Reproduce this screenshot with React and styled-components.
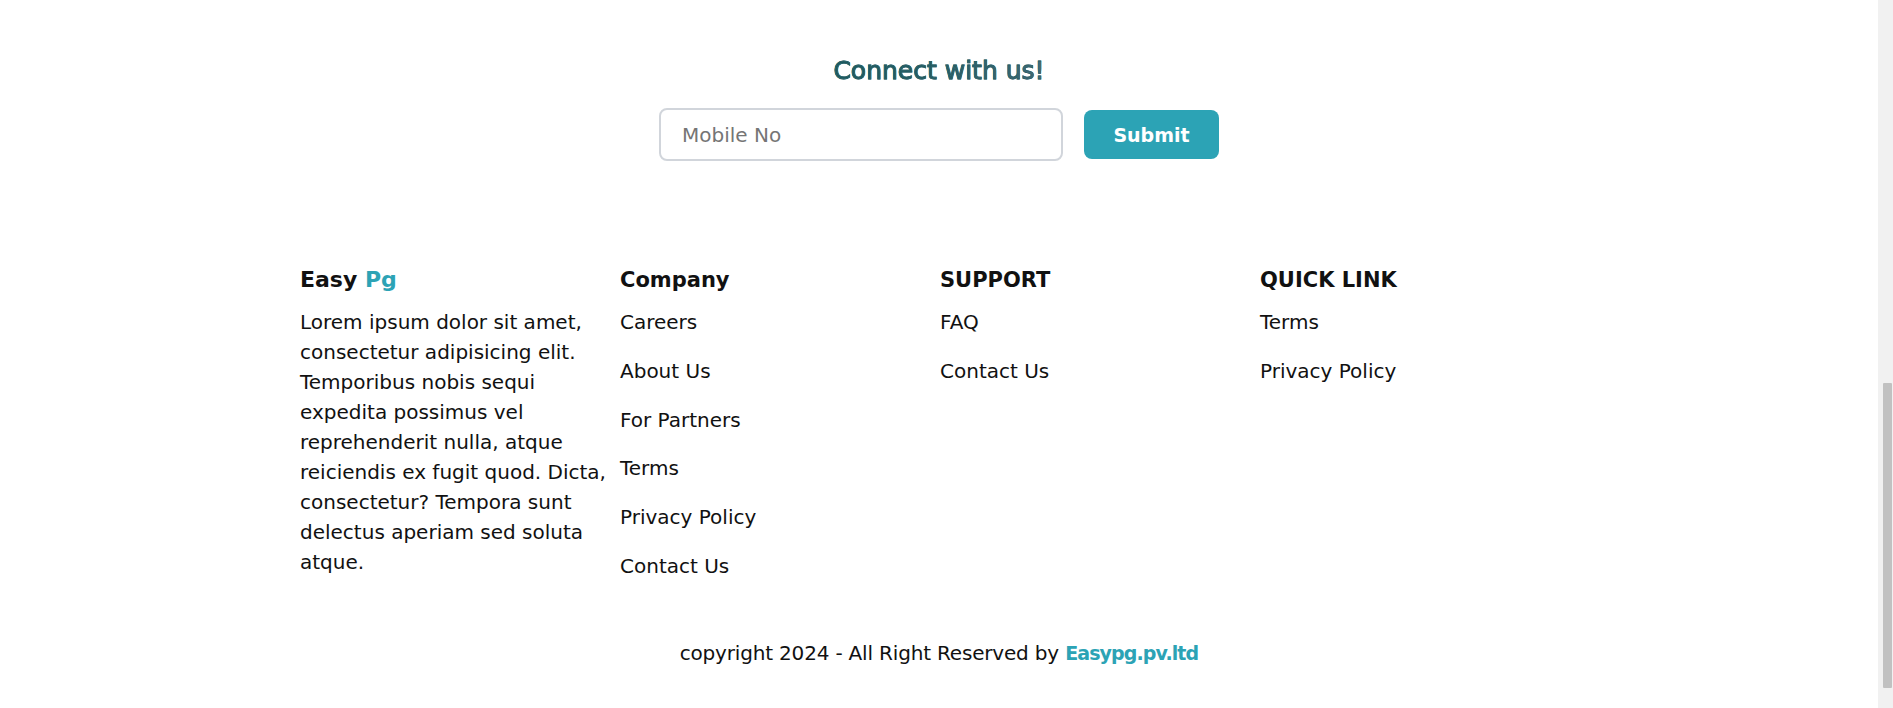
import React from 'react';
import styled, { createGlobalStyle } from 'styled-components';

const colors = {
  teal: '#2ca3b5',
  text: '#111111',
  border: '#d1d5db',
  placeholder: '#9da3b4',
};

const GlobalStyle = createGlobalStyle`
  body {
    margin: 0;
    background: #ffffff;
    font-family: "DejaVu Sans", "Liberation Sans", sans-serif;
    color: ${colors.text};
    overflow: hidden;
  }
  * {
    box-sizing: border-box;
  }
`;

const Viewport = styled.div`
  display: flex;
  height: 100vh;
`;

const Page = styled.div`
  flex: 1;
  padding: 55px 0 40px;
`;

const ScrollTrack = styled.div`
  width: 15px;
  display: flex;
  flex-direction: column;
  justify-content: flex-end;
  align-items: flex-end;
  padding: 0 1px 20px 0;
  background: #f1f1f1;
`;

const ScrollThumb = styled.div`
  width: 9px;
  height: 305px;
  border-radius: 1px;
  background: #c1c1c1;
`;

const Connect = styled.section`
  display: flex;
  flex-direction: column;
  align-items: center;
`;

const ConnectTitle = styled.h2`
  margin: 0 0 21px;
  font-size: 25px;
  line-height: 32px;
  font-weight: 400;
  background: linear-gradient(90deg, #1a5a5e 0%, #1f5c62 45%, #456b78 100%);
  -webkit-background-clip: text;
  background-clip: text;
  color: transparent;
  -webkit-text-stroke: 0.8px #2b6068;
`;

const ConnectForm = styled.form`
  display: flex;
  align-items: center;
  gap: 21px;
`;

const PhoneInput = styled.input`
  width: 404px;
  height: 53px;
  padding: 0 21px;
  border: 2px solid ${colors.border};
  border-radius: 8px;
  font-family: inherit;
  font-size: 20px;
  color: ${colors.text};
  outline: none;

  ::placeholder {
    color: ${colors.placeholder};
  }
`;

const SubmitBtn = styled.button`
  width: 135px;
  height: 49px;
  border: none;
  border-radius: 8px;
  background-color: ${colors.teal};
  color: white;
  font-family: inherit;
  font-size: 19px;
  font-weight: 700;
  cursor: pointer;
`;

const Footer = styled.footer`
  width: 1280px;
  margin: 104px auto 0;
`;

const Columns = styled.div`
  display: grid;
  grid-template-columns: repeat(4, 1fr);
`;

const Column = styled.div`
  display: flex;
  flex-direction: column;
  padding-left: 1px;
`;

const Logo = styled.h3`
  margin: 0 0 12px;
  font-size: 22px;
  line-height: 30px;
  font-weight: 700;

  span {
    color: ${colors.teal};
  }
`;

const About = styled.p`
  margin: 0;
  width: 319px;
  font-size: 20px;
  line-height: 30px;
`;

const Heading = styled.h3`
  margin: 0 0 12px;
  font-size: 21px;
  line-height: 30px;
  font-weight: 700;
`;

const LinkList = styled.ul`
  list-style: none;
  margin: 0;
  padding: 0;
  display: flex;
  flex-direction: column;
  gap: 18.8px;
`;

const LinkItem = styled.li`
  font-size: 20px;
  line-height: 30px;
  color: ${colors.text};
`;

const Copyright = styled.p`
  margin: 57px 0 0;
  text-align: center;
  font-size: 20px;
  line-height: 30px;
  letter-spacing: -0.18px;

  b {
    color: ${colors.teal};
    font-weight: 700;
    font-size: 19px;
    letter-spacing: -0.9px;
  }
`;

const sections = [
  { title: 'Company', links: ['Careers', 'About Us', 'For Partners', 'Terms', 'Privacy Policy', 'Contact Us'] },
  { title: 'SUPPORT', links: ['FAQ', 'Contact Us'] },
  { title: 'QUICK LINK', links: ['Terms', 'Privacy Policy'] },
];

export default function App() {
  return (
    <Viewport>
      <GlobalStyle />
      <Page>
        <Connect>
          <ConnectTitle>Connect with us!</ConnectTitle>
          <ConnectForm onSubmit={(e) => e.preventDefault()}>
            <PhoneInput type="tel" placeholder="Mobile No" />
            <SubmitBtn type="submit">Submit</SubmitBtn>
          </ConnectForm>
        </Connect>
        <Footer>
          <Columns>
            <Column>
              <Logo>Easy <span>Pg</span></Logo>
              <About>
                Lorem ipsum dolor sit amet, consectetur adipisicing elit. Temporibus nobis sequi
                expedita possimus vel reprehenderit nulla, atque reiciendis ex fugit quod. Dicta,
                consectetur? Tempora sunt delectus aperiam sed soluta atque.
              </About>
            </Column>
            {sections.map((s) => (
              <Column key={s.title}>
                <Heading>{s.title}</Heading>
                <LinkList>
                  {s.links.map((l) => (
                    <LinkItem key={l}>{l}</LinkItem>
                  ))}
                </LinkList>
              </Column>
            ))}
          </Columns>
          <Copyright>
            copyright 2024 - All Right Reserved by <b>Easypg.pv.ltd</b>
          </Copyright>
        </Footer>
      </Page>
      <ScrollTrack>
        <ScrollThumb />
      </ScrollTrack>
    </Viewport>
  );
}
